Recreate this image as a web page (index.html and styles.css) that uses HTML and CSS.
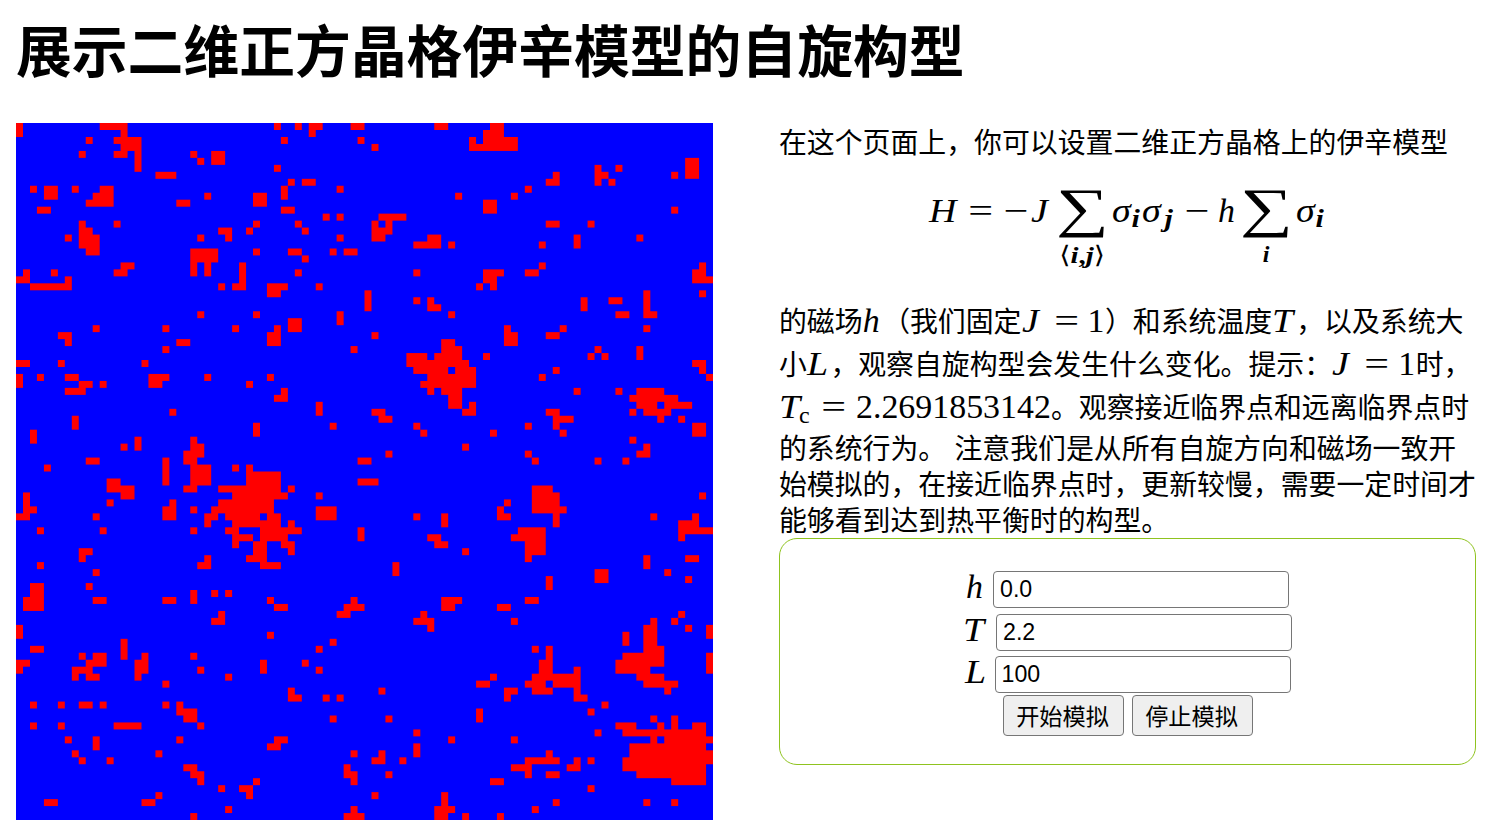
FILE: index.html
```html
<!DOCTYPE html>
<html lang="zh-CN">
<head>
<meta charset="utf-8">
<title>展示二维正方晶格伊辛模型的自旋构型</title>
<link rel="stylesheet" href="styles.css">
</head>
<body>
<h1 class="title">展示二维正方晶格伊辛模型的自旋构型</h1>
<main class="columns">
  <canvas class="lattice" id="lattice" width="700" height="700"></canvas>
  <section class="panel">
    <p class="intro">在这个页面上，你可以设置二维正方晶格上的伊辛模型</p>
    <div class="formula">
      <span class="cell c-H"><i class="wide">H</i></span>
      <span class="cell c-eq"><b class="op">=</b></span>
      <span class="cell c-neg"><b class="op minus">−</b></span>
      <span class="cell c-J"><i class="wide">J</i></span>
      <span class="sum"><span class="sigma">∑</span><span class="under pair"><span class="angle">⟨</span><i>i</i><span>,</span><i>j</i><span class="angle">⟩</span></span></span>
      <span class="cell c-s"><i class="wide sg">σ</i></span>
      <span class="cell c-i"><i class="sub">i</i></span>
      <span class="cell c-s2"><i class="wide sg">σ</i></span>
      <span class="cell c-j"><i class="sub subj">j</i></span>
      <span class="cell c-minus"><b class="op minus">−</b></span>
      <span class="cell c-h"><i>h</i></span>
      <span class="sum"><span class="sigma">∑</span><span class="under"><i>i</i></span></span>
      <span class="cell c-s"><i class="wide sg">σ</i></span>
      <span class="cell c-i"><i class="sub">i</i></span>
    </div>
    <p class="desc">
      <span class="line tall">的磁场<span class="m m-h"><i>h</i></span>（我们固定<span class="m m-eq"><i class="wide j">J</i><b class="op">=</b><span>1</span></span>）和系统温度<span class="m m-T"><i class="wide">T</i></span>，以及系统大</span>
      <span class="line tall">小<span class="m m-L"><i class="wide">L</i></span>，观察自旋构型会发生什么变化。提示：<span class="m m-eq"><i class="wide j">J</i><b class="op">=</b><span>1</span></span>时，</span>
      <span class="line tall"><span class="m m-tc"><i class="wide t">T</i><span class="tsub">c</span><b class="op">=</b><span>2.2691853142</span></span>。观察接近临界点和远离临界点时</span>
      <span class="line first">的系统行为。 注意我们是从所有自旋方向和磁场一致开</span>
      <span class="line">始模拟的，在接近临界点时，更新较慢，需要一定时间才</span>
      <span class="line">能够看到达到热平衡时的构型。</span>
    </p>
    <form class="controls">
      <label class="field"><span class="name n-h"><i>h</i></span><input type="text" value="0.0"></label>
      <label class="field"><span class="name n-T"><i class="wide">T</i></span><input type="text" value="2.2"></label>
      <label class="field"><span class="name n-L"><i class="wide">L</i></span><input type="text" value="100"></label>
      <div class="buttons"><button type="button">开始模拟</button><button type="button">停止模拟</button></div>
    </form>
  </section>
</main>
<script src="lattice.js"></script>
</body>
</html>
```

FILE: styles.css
```css
body {
  margin: 0;
  padding: 0 16px;
  background: #fff;
  color: #000;
  font-family: "Noto Sans CJK SC", sans-serif;
  font-size: 27.88px;
  overflow: hidden;
}

.title {
  margin: 0;
  height: 123px;
  line-height: 95px;
  font-size: 55.8px;
  font-weight: 700;
  white-space: nowrap;
}

.columns {
  display: flex;
  gap: 66px;
}

.lattice {
  width: 697px;
  height: 697px;
  flex: none;
  display: block;
}

.panel {
  width: 697px;
  flex: none;
}

.intro {
  margin: 0;
  height: 37px;
  line-height: 37px;
  white-space: nowrap;
}

/* math */
.formula,
.m,
.name {
  font-family: "Liberation Serif", serif;
  font-size: 33.9px;
  font-weight: 400;
}

i { font-style: italic; }

b { font-weight: 400; }

.wide {
  display: inline-block;
  transform: scaleX(1.12);
  transform-origin: 0 50%;
}

.op {
  display: inline-block;
  font-family: "Liberation Serif", serif;
  transform: scaleX(1.3);
}

.formula {
  display: flex;
  justify-content: center;
  align-items: flex-start;
  height: 111px;
  margin-top: 28px;
}

.cell {
  flex: none;
  height: 46px;
  line-height: 46px;
}

.c-H { width: 33px; }
.c-eq { width: 38px; text-align: center; }
.c-neg { width: 31px; text-align: center; }
.c-J { width: 26px; }
.c-s { width: 20px; padding-left: 5px; }
.c-i { width: 10px; }
.c-s2 { width: 20px; }
.c-j { width: 15px; }
.c-minus { width: 39px; text-align: center; }
.c-h { width: 25px; padding-left: 2px; box-sizing: border-box; }

.sub {
  display: inline-block;
  font-size: 26px;
  font-weight: 700;
  transform: translateY(5px) scaleX(1.15);
}

.subj { transform: translate(3px, 5px) scaleX(1.15); }

.sum {
  width: 50px;
  flex: none;
  display: flex;
  flex-direction: column;
  align-items: center;
}

.sigma {
  height: 52px;
  line-height: 52px;
  font-size: 47px;
  transform: translate(1px, -6px) scale(1.58, 1.15);
}

.under {
  height: 28px;
  line-height: 28px;
  font-size: 24px;
  font-weight: 700;
}

.under.pair { transform: translateY(1px) scaleX(1.2); }

.under .angle {
  font-family: "DejaVu Sans", sans-serif;
  font-weight: 400;
}

/* description */
.desc { margin: 0; }

.line {
  display: block;
  height: 36px;
  line-height: 36px;
  white-space: nowrap;
}

.line.tall {
  height: 43px;
  line-height: 43px;
}

.line.first {
  height: 37px;
  line-height: 39px;
  word-spacing: 2px;
}

.m {
  display: inline-flex;
  align-items: baseline;
  line-height: 36px;
}

.m-h { width: 19.5px; }
.m-T { width: 24px; }
.m-L { width: 23.5px; }
.m-eq { width: 83.5px; }
.m-eq .j { width: 36px; }
.m-eq .op { width: 19px; margin: 0 12px 0 -1px; }
.m-tc { width: 272px; }
.m-tc .t { width: 20px; }
.m-tc .op { width: 19px; margin: 0 13px 0 14px; }

.tsub {
  font-size: 24px;
  width: 11px;
  position: relative;
  top: 5px;
}

/* controls */
.controls {
  box-sizing: border-box;
  height: 227px;
  margin-top: 1px;
  border: 1px solid #8fc31f;
  border-radius: 18px;
  padding-top: 32px;
}

.field {
  display: flex;
  justify-content: center;
  height: 42.5px;
}

.name {
  line-height: 31px;
  height: 37px;
}

.n-h { width: 27px; }
.n-T { width: 33px; }
.n-L { width: 30px; }

input {
  box-sizing: border-box;
  width: 296px;
  height: 37px;
  margin: 0;
  padding: 0 6px;
  border: 1px solid #767676;
  border-radius: 4px;
  font-family: "Liberation Sans", Arial, sans-serif;
  font-size: 23.2px;
  color: #000;
  background: #fff;
}

.buttons {
  display: flex;
  justify-content: center;
  gap: 8px;
  margin-top: -4px;
}

button {
  box-sizing: border-box;
  width: 121px;
  height: 41px;
  margin: 0;
  padding: 0 1px 1px 0;
  border: 1px solid #767676;
  border-radius: 4px;
  background: #efefef;
  color: #000;
  font-family: "Noto Sans CJK SC", sans-serif;
  font-size: 23.2px;
  line-height: 36px;
}
```

FILE: lattice.js
```js
// Flipped spins as x,y[,w[,h]] in lattice cells.
const flipped = `
0,0,1,2 12,0,4 15,1 10,2 14,2,4 15,3,3 9,4 14,4,2 17,4,1,3 25,4 26,5 28,4,2,2 20,7,3
2,9 4,9,2,2 8,9 12,9,2 11,10,3 10,11,4 3,12,2 27,10 23,11,2 9,14 14,14 9,15,2 9,16,3,2
10,18,2 7,16 26,16 29,15,2 30,16 33,15 25,18,4,2 25,20,1,2 27,20,1,2 32,20,1,3 31,23,2
29,23 15,20,2 14,21,2 1,21 5,21 0,22,2 7,22 2,23,6 26,27 11,29 21,29 31,29 6,30,2 7,31
23,31,2 21,32
37,0 40,0 42,0,2 42,1 48,0,2 60,0,2 38,2 49,2 51,3 65,2 65,3,2 37,6 39,8 41,8,2 38,9,1,2
46,9 34,10,2,2 63,10 38,12,2 44,13 46,13 52,13,4 51,14 53,14 51,15,3 51,16,2 34,14 40,14
41,15 46,16 59,16,2 57,17,4 62,17 34,18 39,18,2 45,18 47,18,2 41,19 40,21 57,21 36,23,3
36,24,2 43,23 66,23 50,24,1,3 57,25 59,25 59,26,2 34,27 46,27,1,2 62,27 39,28,2,2 37,29
36,30,2,2 51,30 48,32 61,31,2 61,32,3 56,33,3 60,33,4
68,0,2 67,1,3 67,2,5 67,3,5 83,6,1,3 84,7 85,8 86,6 77,7 76,8,2 96,5,2,3 94,7 73,9 71,10
67,11,2,2 94,12 76,14,2 82,14 80,16,1,2 89,16 75,17 75,20 73,21,2 67,21,3 67,22,2 68,23
98,20 97,21,2 97,22,3 98,24 81,25,1,2 85,25,2 86,27,2 90,24,1,3 90,27,2 90,29 70,29
70,30,2,2 78,29 76,30,2 83,32 89,32,1,2 67,33 82,33 84,33
0,34,2 6,34 18,34 0,36,1,2 3,36 7,36,2 9,37,2 7,38,3 12,37 19,36,3 19,37,2 27,36 33,37
22,41 8,42,1,2 2,44,1,2 17,45,1,2 15,46 25,45 25,46,2 24,47,3 24,48,2 25,49,3,3 24,52,2
21,48,1,4 10,48,2 4,49 13,51,2,2 15,52,2,2 13,54 1,53,1,2 1,55,2 0,56,2 11,56 22,54
21,55,2,2 25,55 31,49 33,49 33,50,5,2 29,52,9 31,53,8 29,54,8 28,55,9 27,56,2 30,56,5
36,56,2 27,57 31,57,7 30,58,2 35,58,6 31,59,3 35,59,4 31,60 34,60,2 38,60,2 34,61,2 39,61
33,62,3 35,63,3 39,52 39,57 3,58 12,58 25,58 9,61,2 9,62 27,62 26,63,2 3,63 11,64 2,66,2
10,66
56,34,9 57,35,5 63,35,3 59,36,7 58,37,8 59,38 61,38,3 62,39,2,2 65,40 64,41,2 36,36 38,38
37,39,2 43,40,1,2 34,43,1,2 45,43 51,41,2 52,42,2 57,43 58,44 64,46 53,47 49,48,2 49,51,3
43,53 43,55,3,2 49,58,1,2 57,56 61,56,1,2 59,59,2 60,60,2 64,61 54,63,1,2
97,34,2 98,35 99,36 77,35 75,36 80,38 86,38 89,38,4 88,39,7 89,40,3 93,40,4 88,41 90,41,4
92,42 95,42 76,41,2 77,42,3 77,43 78,44 73,43 68,44 97,43,2,2 88,45 90,46 89,47,2 73,47
74,48 83,48 87,48 74,52,3 74,53,4,2 74,55,5 77,56,1,2 70,54 69,55 69,56,2 98,53 91,56
97,56 95,57,3 95,58,5 95,59 72,58,4 71,59,5 73,60,3,2 73,62 90,62,1,2 96,62,2 93,64
83,64,2,2 96,65 76,65,1,2
2,67,2 1,68,3,2 11,68,2 21,68,2 25,67,1,2 28,67 30,67 29,70 28,71,2 0,72,1,2 15,74,1,3
2,75,2 9,76 11,76,2 10,77,3 8,78,3 8,79 10,79,2 0,77,2 0,78 18,76 17,77,2,2 17,79 25,76
26,78 30,79 21,80 2,83 6,83 9,83,2 12,83 21,83 23,83,1,2 24,84,2,2 26,86 2,86 6,86 14,86,4
7,88 11,88,1,2 23,88 8,90 9,91 13,91 20,90 24,92,2 25,93,2 26,94 29,95 32,95,2 33,96 20,96
18,97,2 4,97,2 30,98 25,99
36,68 37,69,2 48,68 47,69,3 46,70,2 61,68,3 61,69,2 58,70 57,71,3 59,72 36,73 45,74 43,75
35,77,1,2 41,77 43,78 66,80,2 52,81 39,81 39,82,2 44,82 46,82 45,85 53,85 66,84,1,2 57,87
37,88,2 36,89,2 62,88 57,89,1,2 48,90 52,90 51,91,2 55,91 53,93 47,92 47,93,2 48,94 34,94
51,96 48,98 47,99,3 61,96,1,2 60,98,3 60,99,2 64,99
73,68,2 69,69,2 71,71 95,70 94,71 96,72 99,72,1,2 99,76,1,3 87,73,1,2 91,71 90,72,2,3
90,75,3 87,76,6 86,77,7 86,78,5 89,79,4 90,80,5 93,81 74,75 76,75,1,2 75,77,2,2 80,78
74,79,7 73,80,3 77,80,4 74,81,3 80,81 80,82,2 68,79 70,81,2 70,82 84,83 82,84 83,87 71,88
91,85 94,85,1,2 86,86,3 92,86 97,86,2 87,87,12 91,88 93,88,7 88,89,11 88,90,12 87,91,13
87,92,12 89,93,10 94,94,5 76,90 73,91,5 71,92,3 73,93 76,93,2 80,91 79,92,2 82,91 68,94,2
82,95 77,97 74,98 69,99 90,97 94,97`;

const size = 7;
const ctx = document.getElementById("lattice").getContext("2d");
ctx.fillStyle = "#00f";
ctx.fillRect(0, 0, 700, 700);
ctx.fillStyle = "#f00";
for (const item of flipped.trim().split(/\s+/)) {
  const [x, y, w = 1, h = 1] = item.split(",").map(Number);
  ctx.fillRect(x * size, y * size, w * size, h * size);
}
```
